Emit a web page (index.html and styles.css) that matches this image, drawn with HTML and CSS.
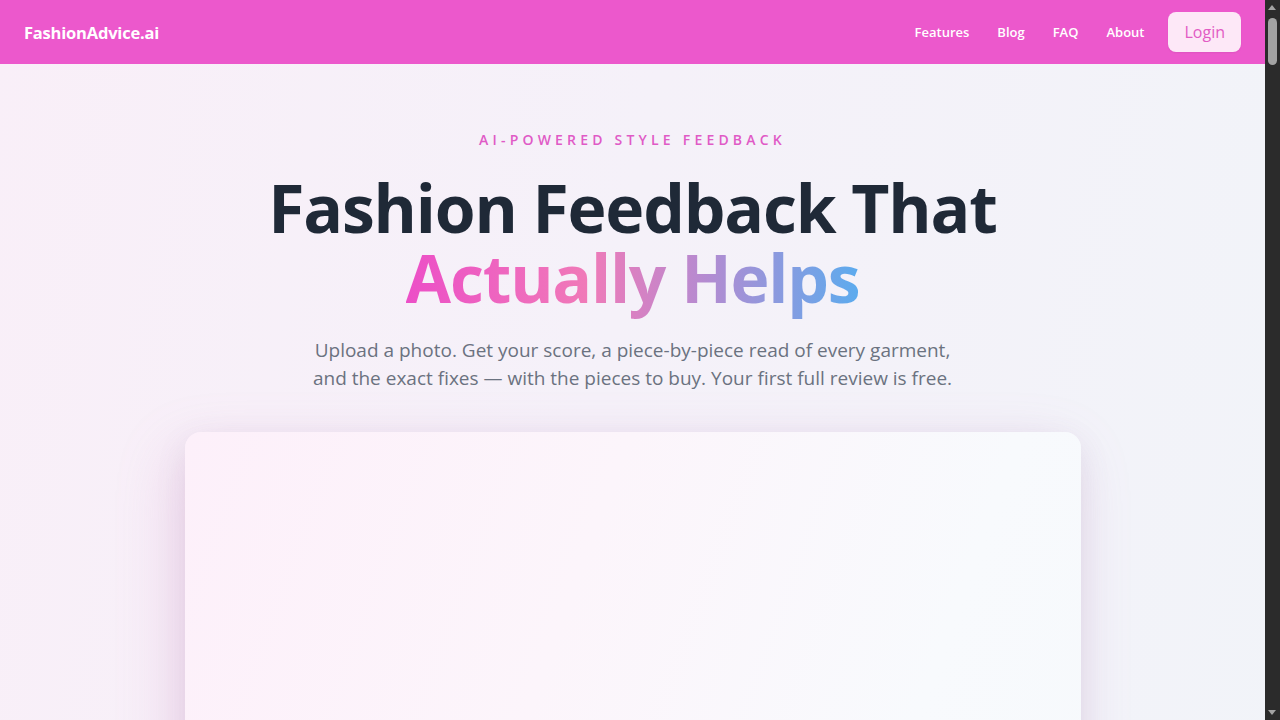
FILE: index.html
```html
<!DOCTYPE html>
<html lang="en">
<head>
<meta charset="utf-8">
<title>FashionAdvice.ai</title>
<link rel="stylesheet" href="styles.css">
</head>
<body>
<header class="nav">
  <a class="logo" href="#">FashionAdvice.ai</a>
  <nav class="links">
    <a href="#">Features</a>
    <a href="#">Blog</a>
    <a href="#">FAQ</a>
    <a href="#">About</a>
    <a class="login" href="#">Login</a>
  </nav>
</header>
<main class="hero">
  <p class="eyebrow">AI-POWERED STYLE FEEDBACK</p>
  <h1 class="title">Fashion Feedback That<br><span class="grad">Actually Helps</span></h1>
  <p class="sub">Upload a photo. Get your score, a piece-by-piece read of every garment,<br>and the exact fixes — with the pieces to buy. Your first full review is free.</p>
  <div class="card"></div>
</main>
<div class="scrollbar" aria-hidden="true">
  <span class="arrow up"></span>
  <span class="thumb"></span>
  <span class="arrow down"></span>
</div>
</body>
</html>
```

FILE: styles.css
```css
* { box-sizing: border-box; }
html, body { margin: 0; padding: 0; }
body {
  font-family: "Open Sans", "Noto Sans", sans-serif;
  background: linear-gradient(100deg, #f9eff8 0%, #f5f1f9 45%, #f1f4f9 100%);
  color: #1f2937;
  min-height: 1200px;
  padding-right: 15px;
}
a { text-decoration: none; }
.nav {
  height: 64px;
  background: #ec58cc;
  display: flex;
  align-items: center;
  justify-content: space-between;
  padding: 0 24px;
}
.logo {
  color: #fff;
  font-weight: 700;
  font-size: 16.5px;
  letter-spacing: -0.2px;
}
.links {
  display: flex;
  align-items: center;
  gap: 28px;
}
.links a {
  color: #fff;
  font-weight: 600;
  font-size: 13px;
}
.links a.login {
  margin-left: -4px;
  background: #fde8f7;
  color: #e25bc4;
  font-weight: 400;
  font-size: 16px;
  padding: 8px 16px;
  border-radius: 8px;
  line-height: 24px;
  box-shadow: 0 1px 2px rgba(0,0,0,0.06);
}
.hero {
  display: flex;
  flex-direction: column;
  align-items: center;
  padding-top: 60px;
}
.eyebrow {
  margin: 0;
  color: #e05ac6;
  font-size: 14px;
  font-weight: 600;
  letter-spacing: 4.2px;
  line-height: 32px;
}
.title {
  margin: 16px 0 0;
  font-size: 66px;
  font-weight: 700;
  line-height: 70px;
  letter-spacing: -1.2px;
  text-align: center;
  color: #1f2937;
}
.grad {
  background: linear-gradient(90deg, #ec4fc7 0%, #f07ab8 40%, #b78ad0 65%, #5cabee 100%);
  -webkit-background-clip: text;
  background-clip: text;
  color: transparent;
}
.sub {
  margin: 24px 0 0;
  font-size: 19px;
  line-height: 28px;
  color: #6b7280;
  text-align: center;
}
.card {
  margin-top: 40px;
  width: 896px;
  height: 600px;
  border-radius: 16px;
  background: linear-gradient(110deg, #fdf0fa 0%, #fcf5fb 40%, #f8fafd 75%, #f6f9fc 100%);
  box-shadow: -10px 20px 60px rgba(200, 110, 180, 0.22), 0 10px 30px rgba(120, 120, 150, 0.12);
}
.scrollbar {
  position: fixed;
  top: 0;
  right: 0;
  width: 15px;
  height: 100vh;
  background: #2b2b2b;
}
.thumb {
  position: absolute;
  left: 3px;
  top: 18px;
  width: 9px;
  height: 47px;
  border-radius: 5px;
  background: #a3a3a3;
}
.arrow {
  position: absolute;
  left: 3px;
  width: 0;
  height: 0;
  border-left: 4.5px solid transparent;
  border-right: 4.5px solid transparent;
}
.arrow.up {
  top: 5px;
  border-bottom: 5px solid #a3a3a3;
}
.arrow.down {
  bottom: 5px;
  border-top: 5px solid #a3a3a3;
}
```
